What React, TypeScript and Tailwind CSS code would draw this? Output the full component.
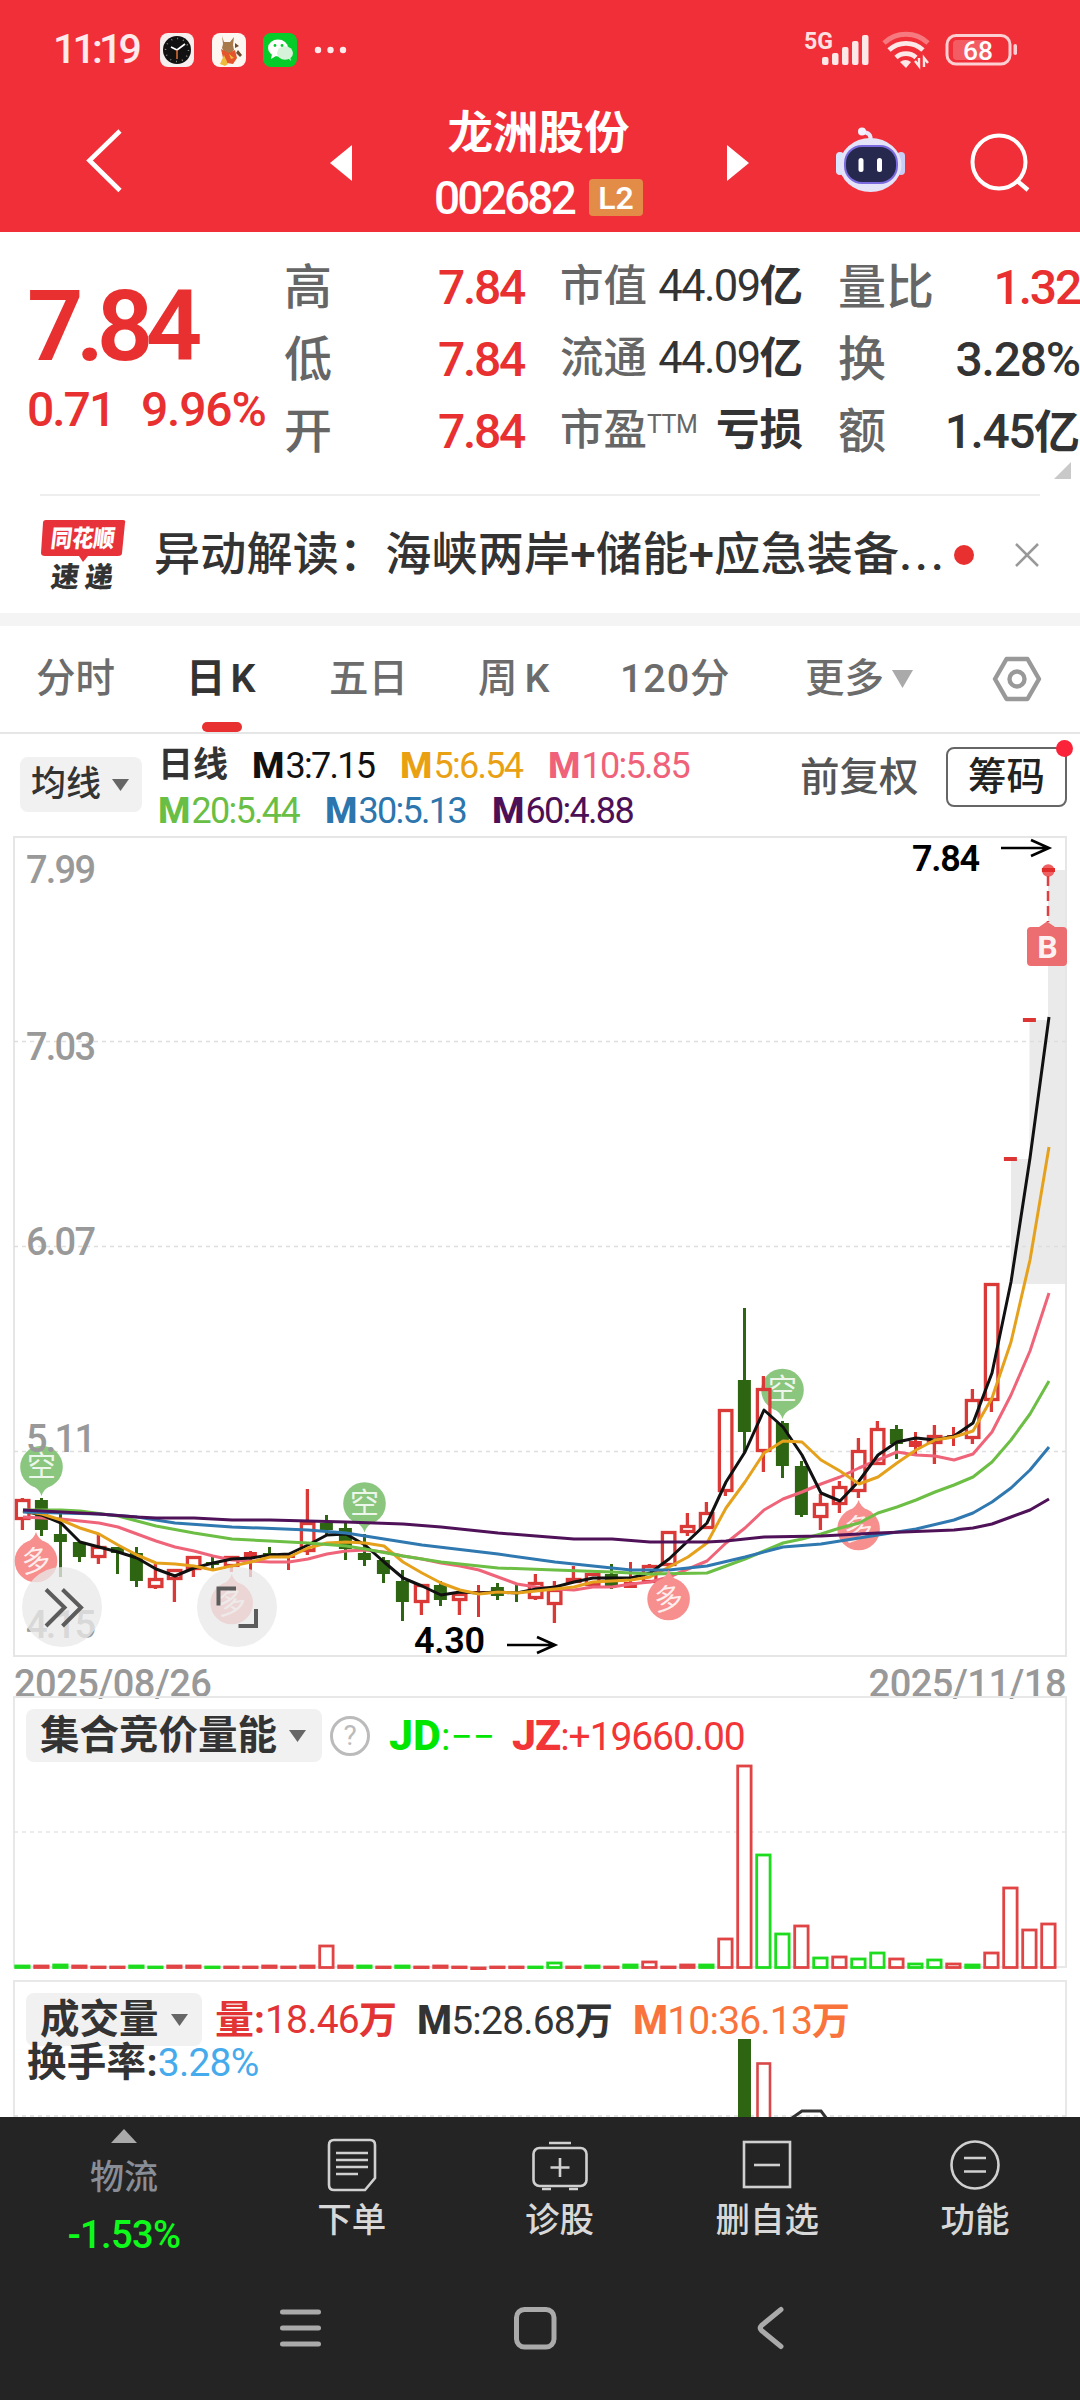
import type { ReactNode } from "react";
import clsx from "clsx";

type Kind = "up" | "down" | "flat";

// [high, top of body, bottom of body, low, kind] in chart coordinates
const candles: [number, number, number, number, Kind][] = [
  [1498, 1499, 1520, 1530, "up"],
  [1498, 1500, 1530, 1536, "down"],
  [1514, 1534, 1542, 1577, "down"],
  [1541, 1542, 1557, 1562, "down"],
  [1533, 1546, 1558, 1564, "up"],
  [1547, 1547, 1553, 1574, "down"],
  [1547, 1553, 1581, 1587, "down"],
  [1564, 1578, 1588, 1589, "up"],
  [1569, 1569, 1580, 1602, "up"],
  [1556, 1556, 1570, 1577, "up"],
  [1556, 1562, 1565, 1570, "down"],
  [1556, 1556, 1567, 1572, "up"],
  [1551, 1552, 1557, 1577, "flat"],
  [1547, 1553, 1556, 1556, "down"],
  [1555, 1555, 1558, 1570, "flat"],
  [1489, 1522, 1552, 1555, "up"],
  [1515, 1523, 1530, 1536, "down"],
  [1523, 1528, 1549, 1560, "down"],
  [1534, 1553, 1560, 1566, "down"],
  [1557, 1560, 1574, 1583, "down"],
  [1570, 1581, 1602, 1621, "down"],
  [1584, 1584, 1603, 1615, "up"],
  [1581, 1585, 1600, 1606, "down"],
  [1591, 1593, 1601, 1615, "up"],
  [1585, 1591, 1593, 1617, "flat"],
  [1583, 1587, 1596, 1600, "down"],
  [1585, 1592, 1594, 1602, "down"],
  [1574, 1582, 1599, 1600, "up"],
  [1581, 1589, 1605, 1623, "up"],
  [1566, 1578, 1583, 1583, "up"],
  [1573, 1573, 1586, 1586, "up"],
  [1564, 1574, 1586, 1589, "down"],
  [1562, 1582, 1588, 1588, "flat"],
  [1564, 1565, 1583, 1583, "up"],
  [1531, 1531, 1566, 1568, "up"],
  [1513, 1525, 1533, 1536, "up"],
  [1502, 1512, 1529, 1529, "up"],
  [1409, 1409, 1492, 1496, "up"],
  [1308, 1380, 1432, 1452, "down"],
  [1376, 1388, 1452, 1472, "up"],
  [1421, 1423, 1466, 1478, "down"],
  [1461, 1466, 1515, 1517, "down"],
  [1494, 1503, 1518, 1530, "up"],
  [1481, 1486, 1505, 1513, "up"],
  [1438, 1450, 1492, 1498, "up"],
  [1421, 1428, 1465, 1465, "up"],
  [1425, 1429, 1444, 1459, "down"],
  [1432, 1441, 1447, 1456, "flat"],
  [1425, 1435, 1444, 1464, "up"],
  [1427, 1435, 1437, 1446, "flat"],
  [1389, 1399, 1439, 1444, "up"],
  [1283, 1283, 1401, 1412, "up"],
  [1157, 1157, 1161, 1161, "flat"],
  [1018, 1018, 1022, 1022, "flat"],
  [868, 868, 872, 872, "flat"],
];

const everyDay = (ys: number[]): [number, number][] => ys.map((y, i) => [i, y]);

const averages: { color: string; points: [number, number][] }[] = [
  {
    color: "#ef6479",
    points: everyDay([
      1517, 1518, 1519, 1521, 1523, 1527, 1534, 1541, 1547, 1551, 1556, 1560, 1561, 1562, 1562, 1559, 1554, 1551, 1550,
      1552, 1556, 1559, 1563, 1566, 1570, 1577, 1584, 1587, 1589, 1590, 1587, 1587, 1584, 1582, 1577, 1569, 1561, 1543,
      1528, 1510, 1499, 1492, 1484, 1477, 1468, 1460, 1452, 1455, 1456, 1460, 1454, 1432, 1395, 1351, 1293,
    ]),
  },
  {
    color: "#111111",
    points: everyDay([
      1511, 1515, 1523, 1542, 1547, 1552, 1558, 1569, 1576, 1568, 1563, 1559, 1558, 1555, 1554, 1545, 1535, 1534, 1545,
      1562, 1578, 1586, 1595, 1592, 1593, 1592, 1593, 1589, 1587, 1582, 1578, 1578, 1578, 1573, 1559, 1541, 1523, 1482,
      1452, 1410, 1427, 1455, 1493, 1501, 1481, 1455, 1442, 1438, 1440, 1436, 1423, 1373, 1282, 1158, 1017,
    ]),
  },
  {
    color: "#e6a11c",
    points: everyDay([
      1511, 1514, 1520, 1528, 1534, 1545, 1555, 1563, 1564, 1566, 1570, 1566, 1562, 1557, 1557, 1548, 1543, 1542, 1543,
      1546, 1562, 1573, 1583, 1590, 1594, 1592, 1593, 1591, 1589, 1587, 1582, 1581, 1580, 1577, 1567, 1557, 1543, 1508,
      1482, 1453, 1441, 1442, 1460, 1471, 1484, 1477, 1463, 1450, 1440, 1437, 1431, 1398, 1342, 1260, 1147,
    ]),
  },
  {
    color: "#6cbe45",
    points: [
      [0, 1510], [2, 1510], [3, 1511], [5, 1516], [7, 1526], [9, 1533], [11, 1539], [13, 1541], [15, 1543], [17, 1546],
      [18, 1549], [20, 1556], [22, 1562], [25, 1568], [28, 1570], [31, 1572], [33, 1574], [36, 1573], [37, 1566],
      [38, 1559], [39, 1551], [40, 1543], [41, 1539], [42, 1534], [43, 1528], [44, 1523], [45, 1513], [46, 1507],
      [47, 1500], [48, 1492], [49, 1485], [50, 1477], [51, 1462], [52, 1440], [53, 1414], [54, 1381],
    ],
  },
  {
    color: "#2f78b0",
    points: [
      [0, 1512], [4, 1514], [6, 1517], [8, 1523], [11, 1527], [15, 1530], [17, 1533], [21, 1545], [25, 1554], [28, 1562],
      [30, 1566], [32, 1570], [34, 1570], [36, 1566], [38, 1557], [40, 1547], [42, 1544], [44, 1538], [45, 1535],
      [47, 1529], [49, 1520], [50, 1513], [51, 1502], [52, 1488], [53, 1470], [54, 1447],
    ],
  },
  {
    color: "#4f1258",
    points: [
      [0, 1510], [4, 1514], [6, 1517], [7, 1518], [9, 1518], [11, 1520], [13, 1520], [15, 1521], [17, 1522], [20, 1524],
      [22, 1527], [25, 1533], [27, 1536], [29, 1539], [31, 1539], [33, 1542], [36, 1542], [37, 1541], [39, 1537],
      [42, 1536], [45, 1533], [49, 1530], [50, 1528], [51, 1524], [52, 1517], [53, 1510], [54, 1499],
    ],
  },
];

// call auction volume, one entry a day: colour and top edge
const auction: ["g" | "r", number][] = [
  ["g", 1965], ["r", 1965], ["g", 1964], ["r", 1965], ["r", 1966], ["r", 1966], ["g", 1965], ["g", 1966], ["r", 1965],
  ["r", 1965], ["g", 1966], ["r", 1966], ["r", 1966], ["r", 1965], ["r", 1966], ["r", 1965], ["r", 1945], ["r", 1965],
  ["g", 1965], ["r", 1966], ["g", 1965], ["r", 1966], ["r", 1965], ["r", 1966], ["r", 1967], ["r", 1966], ["r", 1966],
  ["g", 1966], ["g", 1962], ["r", 1966], ["g", 1965], ["r", 1966], ["g", 1964], ["r", 1961], ["r", 1966], ["r", 1964],
  ["g", 1964], ["r", 1938], ["r", 1765], ["g", 1854], ["g", 1933], ["r", 1925], ["g", 1957], ["r", 1956], ["g", 1958],
  ["g", 1952], ["r", 1958], ["g", 1963], ["g", 1959], ["r", 1963], ["g", 1964], ["r", 1952], ["r", 1887], ["r", 1929],
  ["r", 1923],
];

const dayX = (i: number) => 22.4 + i * 19;

function StatusBar() {
  return (
    <div className="flex h-[100px] items-center pl-[53px] pr-[62px] text-white">
      <span className="w-[107px] text-[41px] font-medium tracking-[-3.800px] text-white/90">11:19</span>
      <svg width="190" height="36" viewBox="0 0 190 36">
        <rect x="0" y="1" width="34" height="34" rx="8" fill="#f7eeee" />
        <circle cx="17" cy="18" r="14" fill="#111" />
        <circle cx="17" cy="18" r="11.5" fill="none" stroke="#888" strokeWidth="1.5" strokeDasharray="1 5" />
        <path d="M11 15l6 3 8-6" fill="none" stroke="#fff" strokeWidth="1.700" />
        <path d="M17 18v9" stroke="#e0703a" strokeWidth="1.5" />
        <rect x="52" y="1" width="34" height="34" rx="8" fill="#fdf7f2" />
        <path d="M62 4l2 6h6l4-5-1 8 1 5-4 4-5-1-3-5 1-4z" fill="#a7794b" />
        <path d="M61 17l8 4 6-3 2 8-4 6-6-1-4-5z" fill="#e5542b" />
        <path d="M60 32l4-9 4 9-3 2z" fill="#eebb3c" />
        <path d="M69 22l2 5 3-1z" fill="#eebb3c" />
        <path d="M78 18l4 5-2 2-4-4zM75 11l4 3-4 2z" fill="#6f4a2c" />
        <rect x="103" y="1" width="34" height="34" rx="8" fill="#05cc28" />
        <ellipse cx="118" cy="16" rx="10" ry="8.5" fill="#fff" />
        <path d="M112 22l-1 5 5-3z" fill="#fff" />
        <ellipse cx="125" cy="21" rx="8" ry="6.8" fill="#d6f3da" />
        <path d="M128 26l3 3-1-5z" fill="#d6f3da" />
        <circle cx="115" cy="13.5" r="1.4" fill="#05cc28" />
        <circle cx="122" cy="13.5" r="1.4" fill="#05cc28" />
        <g fill="#fff" fillOpacity=".9">
          <circle cx="158" cy="18" r="3.2" />
          <circle cx="170.5" cy="18" r="3.2" />
          <circle cx="183" cy="18" r="3.2" />
        </g>
      </svg>
      <svg className="ml-auto" width="214" height="44" viewBox="804 28 214 44">
        <text x="804" y="49" fontSize="24" fontWeight="700" fill="#fde0e1" textLength="29" lengthAdjust="spacingAndGlyphs">5G</text>
        <g fill="#fde8e8">
          <rect x="822" y="57" width="6.5" height="8" rx="2" />
          <rect x="832" y="53" width="6.5" height="12" rx="2" />
          <rect x="842" y="47" width="6.5" height="18" rx="2" />
          <rect x="852" y="41" width="6.5" height="24" rx="2" />
          <rect x="862" y="35" width="6.5" height="30" rx="2" />
        </g>
        <g fill="none" stroke="#fde8e8" strokeWidth="4.800">
          <path d="M884 43a32 32 0 0 1 44 0" strokeOpacity=".4" />
          <path d="M889 50a25 25 0 0 1 34 0" />
          <path d="M896 57.500a15 15 0 0 1 20 0" />
        </g>
        <path d="M900 62a9 9 0 0 1 11 0l-5 6z" fill="#fde8e8" />
        <path d="M915 61l4 5V58M928 63l-4-5v9" fill="none" stroke="#fde8e8" strokeWidth="2.400" />
        <rect x="947" y="35.500" width="63" height="28.500" rx="9" fill="none" stroke="#fcd0d2" strokeWidth="3" />
        <rect x="953" y="40" width="35" height="20" rx="4" fill="#fff" fillOpacity=".22" />
        <rect x="1013.500" y="44" width="3.500" height="11" rx="1.700" fill="#fcd0d2" />
        <text x="963" y="59.500" fontSize="26" fontWeight="500" fill="#fff" textLength="30" lengthAdjust="spacingAndGlyphs">68</text>
      </svg>
    </div>
  );
}

function TitleBar() {
  return (
    <div className="flex h-[132px] items-center text-white">
      <svg className="ml-[84px] mt-[-12px]" width="42" height="70" viewBox="84 125 42 70">
        <path d="M120 131L89.500 160.500 120 190.500" fill="none" stroke="#fff" strokeWidth="4.600" />
      </svg>
      <svg className="ml-[204px] mt-[-7px]" width="22" height="36" viewBox="0 0 22 36">
        <path d="M22 0v36L0 18z" fill="#fff" />
      </svg>
      <div className="flex w-[375px] flex-col items-center pr-[2px]">
        <div className="h-[60px] text-[45.500px] font-bold leading-[60px]">龙洲股份</div>
        <div className="mt-[3px] flex h-[62px] items-center gap-[15px] leading-none">
          <span className="text-[46px] font-medium tracking-[-2.800px]">002682</span>
          <span className="flex h-[37px] w-[54px] items-center justify-center rounded-sm bg-[#e38c48] text-[32px] font-semibold">L2</span>
        </div>
      </div>
      <svg className="mt-[-7px]" width="22" height="36" viewBox="0 0 22 36">
        <path d="M0 0v36l22-18z" fill="#fff" />
      </svg>
      <svg className="ml-[83px] mt-[-12px]" width="76" height="72" viewBox="832 124 76 72">
        <path d="M870 141c2-6-2-9-8-9" fill="none" stroke="#e9e6fb" strokeWidth="4" strokeLinecap="round" />
        <circle cx="862" cy="131.500" r="4" fill="#f3f0ff" />
        <rect x="836" y="152" width="8" height="23" rx="4" fill="#d9e5ff" />
        <rect x="897" y="152" width="8" height="23" rx="4" fill="#c9cdf6" />
        <ellipse cx="870.500" cy="165" rx="31" ry="27" fill="#e4e3f8" />
        <rect x="844" y="145" width="54" height="39" rx="18" fill="#7a6ade" />
        <rect x="846" y="147" width="50" height="35" rx="16" fill="#26294d" />
        <rect x="858.500" y="158" width="5" height="14" rx="2.500" fill="#fff" />
        <rect x="877" y="158" width="5" height="14" rx="2.500" fill="#fff" />
      </svg>
      <svg className="ml-[60px] mt-[-7px]" width="62" height="62" viewBox="967 132 62 62">
        <circle cx="998" cy="162" r="26.500" fill="none" stroke="#fff" strokeWidth="4" />
        <path d="M1015 180l12 10" stroke="#fff" strokeWidth="4.400" />
      </svg>
    </div>
  );
}

function Row({ className, children }: { className?: string; children: ReactNode }) {
  return <div className={clsx("flex h-[72px] items-center whitespace-nowrap leading-none", className)}>{children}</div>;
}

function Quote() {
  return (
    <section className="flex h-[262px] font-medium text-[#333]">
      <div className="w-[284px] pl-[27px] pt-[45px] text-[#e93030]">
        <div className="h-[98px] text-[99px] font-semibold leading-[98px] tracking-[-7.500px]">7.84</div>
        <div className="mt-[8px] flex gap-[29px] text-[48px] leading-[54px]">
          <span className="w-[85px] tracking-[-2px]">0.71</span>
          <span className="tracking-[-1.200px]">9.96%</span>
        </div>
      </div>
      <div className="w-[240px] pt-[20px] text-[48px]">
        {["高", "低", "开"].map((name) => (
          <Row key={name} className="justify-between">
            <span className="text-[48px] text-[#666]">{name}</span>
            <span className="tracking-[-2.300px] text-[#e93030]">7.84</span>
          </Row>
        ))}
      </div>
      <div className="ml-[36px] w-[243px] pt-[19px] text-[43.500px]">
        <Row className="justify-between">
          <span className="text-[#666]">市值</span>
          <span className="font-normal tracking-[-1.600px]">44.09<b className="font-bold tracking-normal">亿</b></span>
        </Row>
        <Row className="justify-between">
          <span className="text-[#666]">流通</span>
          <span className="font-normal tracking-[-1.600px]">44.09<b className="font-bold tracking-normal">亿</b></span>
        </Row>
        <Row className="justify-between">
          <span className="flex text-[#666]">
            市盈<span className="mt-[3px] text-[25px] font-normal tracking-[-0.500px]">TTM</span>
          </span>
          <b className="font-bold">亏损</b>
        </Row>
      </div>
      <div className="ml-[35px] w-[242px] pt-[20px] text-[48px]">
        <Row className="justify-between">
          <span className="text-[#666]">量比</span>
          <span className="tracking-[-2.200px] text-[#e93030]">1.32</span>
        </Row>
        <Row className="justify-between">
          <span className="text-[#666]">换</span>
          <span className="tracking-[-1.200px]">3.28%</span>
        </Row>
        <Row className="justify-between">
          <span className="text-[#666]">额</span>
          <span className="tracking-[-1.500px]">1.45<b className="text-[46px] font-bold tracking-normal">亿</b></span>
        </Row>
        <svg className="ml-auto mr-[9px] mt-[-6px]" width="17" height="17" viewBox="0 0 17 17">
          <path d="M17 0v17H0z" fill="#c9c9c9" />
        </svg>
      </div>
    </section>
  );
}

function News() {
  return (
    <section className="mx-10 flex h-[119px] items-center border-t-2 border-[#eeeeee]">
      <svg width="86" height="74" viewBox="40 517 86 74">
        <path d="M46 519h77q3 0 2 3l-3 30q0 3-4 3H88l-5 6-4-6H45q-4 0-4-3l2-30q0-3 3-3z" fill="#e8323a" />
        <g transform="skewX(-7)">
          <text x="117" y="546" fontSize="24" fontWeight="900" fill="#fff" textLength="64" lengthAdjust="spacingAndGlyphs">同花顺</text>
          <text x="122" y="586" fontSize="28" fontWeight="900" fill="#333" textLength="62">速递</text>
        </g>
      </svg>
      <h2 className="ml-[28px] w-[792px] whitespace-nowrap text-[46px] font-medium tracking-[0.250px] text-[#333]">
        异动解读：海峡两岸+储能+应急装备<span className="tracking-[3px]">...</span>
      </h2>
      <span className="ml-[8px] size-5 rounded-full bg-[#e93030]" />
      <svg className="ml-auto" width="26" height="26" viewBox="0 0 26 26">
        <path d="M2 2l22 22M24 2L2 24" stroke="#999" strokeWidth="2.500" />
      </svg>
    </section>
  );
}

const tabs = [
  { name: "分时", cell: "ml-[36px] w-[150px]" },
  { name: "日K", cell: "w-[143px] font-semibold tracking-[5px] text-[#333]" },
  { name: "五日", cell: "w-[149px]" },
  { name: "周K", cell: "w-[142px] tracking-[7px]" },
  { name: "120分", cell: "w-[185px] tracking-[0.900px]" },
];

function Tabs() {
  return (
    <nav className="relative flex h-[108px] items-center border-b-2 border-[#e6e6e6] text-[39.500px] font-medium text-[#6c6c6c]">
      {tabs.map((tab) => (
        <span key={tab.name} className={tab.cell}>
          {tab.name}
        </span>
      ))}
      <span>更多</span>
      <svg className="ml-[8px]" width="21" height="18" viewBox="0 0 21 18">
        <path d="M0 0h21L10.500 18z" fill="#aaa" />
      </svg>
      <svg className="ml-[79px]" width="50" height="48" viewBox="0 0 50 48">
        <path d="M14.500 4h21L47 24 35.500 44h-21L3 24z" fill="none" stroke="#999" strokeWidth="4.400" strokeLinejoin="round" />
        <circle cx="25" cy="24" r="7.500" fill="none" stroke="#999" strokeWidth="4.400" />
      </svg>
      <span className="absolute bottom-0 left-[202px] h-[10px] w-10 rounded-[5px] bg-[#e93030]" />
    </nav>
  );
}

function Caret({ className }: { className?: string }) {
  return (
    <svg className={className} width="17" height="12" viewBox="0 0 17 12">
      <path d="M0 0h17L8.500 12z" fill="#666" />
    </svg>
  );
}

function Average({ n, value, className }: { n: number; value: string; className: string }) {
  return (
    <span className={clsx("tracking-[-1.700px]", className)}>
      <b className="mr-px text-[37px] font-extrabold tracking-normal">M</b>
      {n}:{value}
    </span>
  );
}

function AverageBar() {
  return (
    <div className="flex h-[102px] items-start text-[36px] leading-none">
      <div className="ml-5 mt-[22px] flex h-[55px] w-[122px] items-center rounded-lg bg-[#f1f1f1] pl-[11px] text-[35px] font-medium text-[#333]">
        均线
        <Caret className="ml-[11px]" />
      </div>
      <div className="ml-4 mt-[7px] w-[600px] whitespace-nowrap">
        <div className="flex h-[46px] items-center">
          <b className="w-[94px] text-[35px] text-[#333]">日线</b>
          <Average n={3} value="7.15" className="w-[148px] text-[#111]" />
          <Average n={5} value="6.54" className="w-[148px] text-[#e9a013]" />
          <Average n={10} value="5.85" className="text-[#f0627a]" />
        </div>
        <div className="flex h-[44px] items-center">
          <Average n={20} value="5.44" className="w-[167px] text-[#69bf45]" />
          <Average n={30} value="5.13" className="w-[167px] text-[#2c76ad]" />
          <Average n={60} value="4.88" className="text-[#4d1057]" />
        </div>
      </div>
      <span className="ml-[42px] mt-[23px] w-[120px] text-[39.500px] font-medium text-[#555]">前复权</span>
      <div className="relative ml-[26px] mt-[12px] flex h-[60px] w-[121px] items-center justify-center rounded-lg border-2 border-[#666] text-[38.500px] font-medium text-[#222]">
        筹码
        <span className="absolute right-[-8px] top-[-9px] size-[17px] rounded-full bg-[#fb2339]" />
      </div>
    </div>
  );
}

function Pin({ x, y, up }: { x: number; y: number; up?: boolean }) {
  const color = up ? "#f68f8d" : "#8bc67f";
  return (
    <g>
      <circle cx={x} cy={y} r="21.300" fill={color} />
      <path
        d={up ? `M${x - 10} ${y - 18}Q${x - 2} ${y - 22} ${x} ${y - 29}Q${x + 2} ${y - 22} ${x + 10} ${y - 18}z` : `M${x - 10} ${y + 18}Q${x - 2} ${y + 22} ${x} ${y + 29}Q${x + 2} ${y + 22} ${x + 10} ${y + 18}z`}
        fill={color}
      />
      <text x={x} y={y + 10} fontSize="29" fill="#fff" fillOpacity=".85" textAnchor="middle" transform={up ? `rotate(-8 ${x} ${y})` : undefined}>
        {up ? "多" : "空"}
      </text>
    </g>
  );
}

function Candle({ i }: { i: number }) {
  const [high, top, bottom, low, kind] = candles[i];
  const x = dayX(i);
  if (kind === "up") {
    return (
      <g stroke="#d93a38" strokeWidth="3.300" fill="none">
        <path d={`M${x} ${high}V${top}M${x} ${bottom}V${low}`} />
        <rect x={x - 6} y={top + 1.5} width="12.500" height={Math.max(bottom - top - 3, 1)} />
      </g>
    );
  }
  const color = kind === "down" ? "#2e6512" : "#dc3534";
  return (
    <g fill={color}>
      <rect x={x - 1.4} y={high} width="3" height={low - high} />
      <rect x={x - 6.5} y={top} width="13" height={bottom - top} />
    </g>
  );
}

const priceLabels = [
  { text: "7.99", y: 883 },
  { text: "7.03", y: 1060 },
  { text: "6.07", y: 1255 },
  { text: "5.11", y: 1452 },
  { text: "4.15", y: 1638 },
];

function KLine() {
  return (
    <svg className="block" width="1080" height="824" viewBox="0 835 1080 824">
      <path d="M1011 1159h18.500v-139h18.500V870h18v414h-55z" fill="#eaeaea" />
      <rect x="14" y="837" width="1052" height="819" fill="none" stroke="#e6e6e6" strokeWidth="2" />
      <path d="M14 1041.500H1066M14 1246.500H1066M14 1451.500H1066" stroke="#dedede" strokeWidth="1.300" strokeDasharray="4 4" />
      <Pin x={41.5} y={1467} />
      <Pin x={364.5} y={1503.5} />
      <Pin x={782.5} y={1390} />
      <Pin x={36} y={1561} up />
      <Pin x={231.7} y={1603} up />
      <Pin x={858.6} y={1529} up />
      {candles.map((_, i) => (
        <Candle key={i} i={i} />
      ))}
      {averages.map((line) => (
        <polyline
          key={line.color}
          points={line.points.map(([i, y]) => `${dayX(i) + 0.6},${y}`).join(" ")}
          fill="none"
          stroke={line.color}
          strokeWidth="3"
          strokeLinejoin="round"
        />
      ))}
      <Pin x={668.6} y={1599} up />
      {priceLabels.map((label) => (
        <text key={label.text} x="26" y={label.y} fontSize="38" fontWeight="500" fill="#999" textLength="70">
          {label.text}
        </text>
      ))}

      {/* highest and lowest price */}
      <g fontWeight="600" fontSize="36" fill="#000">
        <text x="912" y="871" textLength="68">7.84</text>
        <text x="414" y="1653" textLength="71">4.30</text>
      </g>
      <g fill="none" stroke="#000" strokeWidth="2.600">
        <path d="M1001 848h47M1031 840l18 8-18 8" />
        <path d="M507 1645h47M537 1637l18 8-18 8" />
      </g>

      {/* buy marker */}
      <path d="M1042 870.500a6 6 0 1 0 12.500 0a6 6 0 1 0-12.500 0" fill="#ee6062" />
      <rect x="1042" y="868" width="13" height="4" fill="#e12c2c" />
      <path d="M1048 876V922" stroke="#dd4043" strokeWidth="2.500" strokeDasharray="10 5" />
      <path d="M1031 927h8l8-5.500 8 5.500h8q4 0 4 4v31q0 4-4 4h-32q-4 0-4-4v-31q0-4 4-4z" fill="#ec6365" fillOpacity=".93" />
      <text x="1047.500" y="958" fontSize="32" fontWeight="700" fill="#fff" fillOpacity=".92" textAnchor="middle">B</text>

      <g fill="#e9e9e9" fillOpacity=".78">
        <circle cx="62" cy="1607" r="40" />
        <circle cx="237" cy="1607" r="40" />
      </g>
      <g fill="none" stroke="#5c5c5c" strokeWidth="4">
        <path d="M46 1589.500l18.500 18L46 1626M62.500 1589.500l18.500 18-18.500 18.500" />
        <path d="M218.500 1605.500v-17H236M256 1609v17h-17.500" />
      </g>
    </svg>
  );
}

function AuctionPanel() {
  return (
    <section className="relative">
      <svg className="block" width="1080" height="285" viewBox="0 1695 1080 285">
        <rect x="14" y="1697" width="1052" height="270" fill="none" stroke="#e8e8e8" strokeWidth="2" />
        <path d="M14 1832H1066" stroke="#e6e6e6" strokeWidth="1.500" strokeDasharray="4 4" />
        {auction.map(([color, top], i) => (
          <rect
            key={i}
            x={dayX(i) - 6.7}
            y={top + 1}
            width="13.400"
            height={Math.max(1967.5 - top - 1, 0.6)}
            fill={top < 1964 ? "#fff" : "none"}
            stroke={color === "g" ? "#1ddc1d" : "#e04444"}
            strokeWidth="2.800"
          />
        ))}
      </svg>
      {/* the legend lies over the plot */}
      <div className="absolute left-[26px] top-[14px] flex h-[53px] items-center whitespace-nowrap text-[39px] leading-none">
        <div className="flex h-full w-[296px] items-center rounded-lg bg-[#f1f1f1] pl-[14px] text-[39.500px] font-bold text-[#333]">
          集合竞价量能
          <Caret className="ml-[12px]" />
        </div>
        <span className="ml-[8px] flex size-10 items-center justify-center rounded-full border-[3px] border-[#bbb] text-[28px] text-[#bbb]">?</span>
        <span className="ml-[19px] w-[123px] text-[#00e600]"><b className="text-[43px] font-extrabold">JD</b>:−−</span>
        <span className="tracking-[-1.100px] text-[#f23536]"><b className="text-[43px] font-extrabold tracking-[-1px]">JZ</b>:+19660.00</span>
      </div>
    </section>
  );
}

function VolumePanel() {
  return (
    <section className="relative">
      <svg className="block" width="1080" height="137" viewBox="0 1980 1080 137">
        <path d="M14 2120V1981H1066V2120" fill="none" stroke="#e8e8e8" strokeWidth="2" />
        <path d="M14 2116H1066" stroke="#dcdcdc" strokeWidth="1.500" strokeDasharray="4 4" />
        <rect x="738" y="2039" width="13" height="80" fill="#2e6512" />
        <rect x="757.500" y="2063.500" width="12.500" height="60" fill="#fff" stroke="#d94848" strokeWidth="2.600" />
        <path d="M792 2118l10-7h19l6 8" fill="none" stroke="#333" strokeWidth="3" />
      </svg>
      <div className="absolute left-[26px] top-[13px] flex h-[53px] items-center whitespace-nowrap text-[39px] leading-none text-[#333]">
        <div className="flex h-full w-[176px] items-center rounded-lg bg-[#f1f1f1] pl-[14px] text-[39.500px] font-bold">
          成交量
          <Caret className="ml-[12px]" />
        </div>
        <span className="ml-[13px] w-[202px] pt-[2px] tracking-[-0.800px] text-[#e23434]"><b className="font-bold tracking-normal">量:</b>18.46<b className="text-[38px] font-bold">万</b></span>
        <span className="w-[216px] pt-[2px] tracking-[-0.800px]"><b className="text-[40px] font-extrabold">M</b>5:28.68<b className="text-[38px] font-bold">万</b></span>
        <span className="pt-[2px] tracking-[-0.800px] text-[#f9743c]"><b className="text-[40px] font-extrabold">M</b>10:36.13<b className="text-[38px] font-bold">万</b></span>
      </div>
      <div className="absolute left-[27px] top-[63px] whitespace-nowrap text-[39px] leading-none tracking-[-0.800px] text-[#46abec]">
        <b className="text-[39.500px] font-bold tracking-[0.300px] text-[#333]">换手率:</b>3.28%
      </div>
    </section>
  );
}

const actions = [
  {
    name: "下单",
    icon: (
      <>
        <path d="M10 4h36q5 0 5 5v33L41 54H10q-5 0-5-5V9q0-5 5-5z" />
        <path d="M12 17h32M12 24h32M12 31h32M12 38h22" />
      </>
    ),
  },
  {
    name: "诊股",
    icon: (
      <>
        <rect x="1.500" y="12" width="53" height="38" rx="6" />
        <path d="M17 7h22M28 22v19M18.500 31.500h19M10 53h9M37 53h9" />
      </>
    ),
  },
  {
    name: "删自选",
    icon: (
      <>
        <rect x="5" y="6" width="46" height="45" />
        <path d="M15 29h26" />
      </>
    ),
  },
  {
    name: "功能",
    icon: (
      <>
        <circle cx="28" cy="29" r="23.500" />
        <path d="M17 22h22M17 35.500h22" />
      </>
    ),
  },
];

function BottomBar() {
  return (
    <footer className="flex h-[139px] bg-[#242424] leading-none">
      <div className="flex w-[248px] flex-col items-center pt-3">
        <svg width="26" height="14" viewBox="0 0 26 14">
          <path d="M13 0l13 14H0z" fill="#aaa" />
        </svg>
        <span className="mt-[17px] text-[34px] font-medium text-[#888d96]">物流</span>
        <span className="mt-[22px] text-[38px] font-medium tracking-[-0.600px] text-[#0dfa1a]">-1.53%</span>
      </div>
      {actions.map((action) => (
        <div key={action.name} className="flex w-[207.700px] flex-col items-center pt-[19px] text-[34.500px] font-medium text-[#d8d8d8]">
          <svg width="56" height="58" viewBox="0 0 56 58" fill="none" stroke="#d0d0d0" strokeWidth="2.600">
            {action.icon}
          </svg>
          <span className="mt-[9px]">{action.name}</span>
        </div>
      ))}
    </footer>
  );
}

function SystemNav() {
  return (
    <div className="h-[144px] bg-[#242424] pt-[46px]">
      <svg className="ml-[276px]" width="520" height="52" viewBox="276 2302 520 52" fill="none" stroke="#aaa" strokeWidth="5" strokeLinecap="round" strokeLinejoin="round">
        <path d="M282.500 2312h36M282.500 2328h36M282.500 2344h36" />
        <rect x="516.500" y="2309.500" width="37.500" height="37.500" rx="8" />
        <path d="M781 2309.500l-19.500 16q-2.500 2.500 0 5l19.500 16" />
      </svg>
    </div>
  );
}

export default function App() {
  return (
    <main className="h-[2400px] w-[1080px] overflow-hidden bg-white font-['Roboto','Noto_Sans_CJK_SC',sans-serif]">
      <header className="h-[232px] bg-[#f12f38]">
        <StatusBar />
        <TitleBar />
      </header>
      <Quote />
      <News />
      <div className="h-[13px] bg-[#f4f4f4]" />
      <Tabs />
      <div className="h-px" />
      <AverageBar />
      <div className="mt-[-2px]">
        <KLine />
      </div>
      <div className="flex h-[36px] items-center justify-between pl-[14px] pr-[14px] pt-[13px] text-[38px] font-medium leading-none tracking-[-0.500px] text-[#999]">
        <span>2025/08/26</span>
        <span>2025/11/18</span>
      </div>
      <AuctionPanel />
      <VolumePanel />
      <BottomBar />
      <SystemNav />
    </main>
  );
}
